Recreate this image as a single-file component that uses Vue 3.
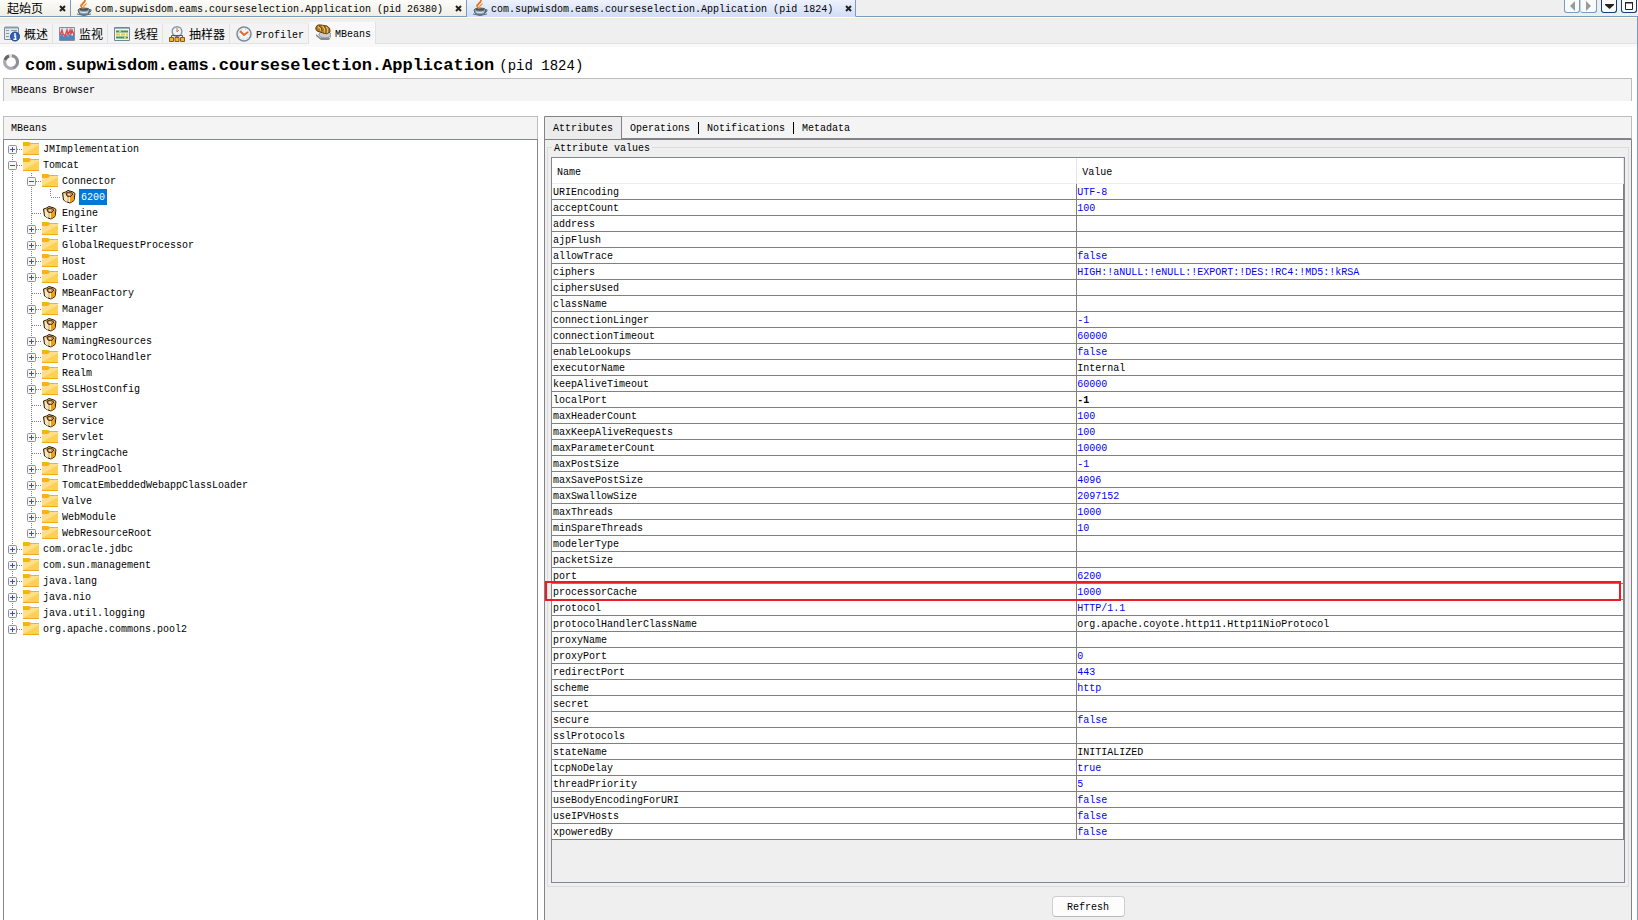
<script setup>
import { ref } from 'vue'

const docTabs = [
  { title: '起始页', icon: false },
  { title: 'com.supwisdom.eams.courseselection.Application (pid 26380)', icon: true },
  { title: 'com.supwisdom.eams.courseselection.Application (pid 1824)', icon: true, active: true }
]

const viewTabs = [
  { id: 'overview', title: '概述' },
  { id: 'monitor', title: '监视' },
  { id: 'threads', title: '线程' },
  { id: 'sampler', title: '抽样器' },
  { id: 'profiler', title: 'Profiler' },
  { id: 'mbeans', title: 'MBeans' }
]
const activeView = ref('mbeans')

const paneTabs = ['Attributes', 'Operations', 'Notifications', 'Metadata']
const activePane = ref('Attributes')

// [label, depth, expander, icon]; expander is '+', '-' or ''
const nodes = [
  ['JMImplementation', 0, '+', 'folder'],
  ['Tomcat', 0, '-', 'folder'],
  ['Connector', 1, '-', 'folder'],
  ['6200', 2, '', 'bean'],
  ['Engine', 1, '', 'bean'],
  ['Filter', 1, '+', 'folder'],
  ['GlobalRequestProcessor', 1, '+', 'folder'],
  ['Host', 1, '+', 'folder'],
  ['Loader', 1, '+', 'folder'],
  ['MBeanFactory', 1, '', 'bean'],
  ['Manager', 1, '+', 'folder'],
  ['Mapper', 1, '', 'bean'],
  ['NamingResources', 1, '+', 'bean'],
  ['ProtocolHandler', 1, '+', 'folder'],
  ['Realm', 1, '+', 'folder'],
  ['SSLHostConfig', 1, '+', 'folder'],
  ['Server', 1, '', 'bean'],
  ['Service', 1, '', 'bean'],
  ['Servlet', 1, '+', 'folder'],
  ['StringCache', 1, '', 'bean'],
  ['ThreadPool', 1, '+', 'folder'],
  ['TomcatEmbeddedWebappClassLoader', 1, '+', 'folder'],
  ['Valve', 1, '+', 'folder'],
  ['WebModule', 1, '+', 'folder'],
  ['WebResourceRoot', 1, '+', 'folder'],
  ['com.oracle.jdbc', 0, '+', 'folder'],
  ['com.sun.management', 0, '+', 'folder'],
  ['java.lang', 0, '+', 'folder'],
  ['java.nio', 0, '+', 'folder'],
  ['java.util.logging', 0, '+', 'folder'],
  ['org.apache.commons.pool2', 0, '+', 'folder']
]

// A guide continues downward while a later sibling exists at that depth.
function continues(index, depth) {
  for (let i = index + 1; i < nodes.length; i++) {
    if (nodes[i][1] < depth) return false
    if (nodes[i][1] === depth) return true
  }
  return false
}

const tree = nodes.map(([label, depth, expander, icon], i) => ({
  label,
  expander,
  icon,
  cells: Array.from({ length: depth + 1 }, (_, d) => ({
    own: d === depth,
    up: i > 0,
    down: continues(i, d)
  }))
}))
const selected = ref('6200')

const attributes = [
  ['URIEncoding', 'UTF-8'],
  ['acceptCount', '100'],
  ['address', ''],
  ['ajpFlush', ''],
  ['allowTrace', 'false'],
  ['ciphers', 'HIGH:!aNULL:!eNULL:!EXPORT:!DES:!RC4:!MD5:!kRSA'],
  ['ciphersUsed', ''],
  ['className', ''],
  ['connectionLinger', '-1'],
  ['connectionTimeout', '60000'],
  ['enableLookups', 'false'],
  ['executorName', 'Internal', 'plain'],
  ['keepAliveTimeout', '60000'],
  ['localPort', '-1', 'strong'],
  ['maxHeaderCount', '100'],
  ['maxKeepAliveRequests', '100'],
  ['maxParameterCount', '10000'],
  ['maxPostSize', '-1'],
  ['maxSavePostSize', '4096'],
  ['maxSwallowSize', '2097152'],
  ['maxThreads', '1000'],
  ['minSpareThreads', '10'],
  ['modelerType', ''],
  ['packetSize', ''],
  ['port', '6200'],
  ['processorCache', '1000'],
  ['protocol', 'HTTP/1.1'],
  ['protocolHandlerClassName', 'org.apache.coyote.http11.Http11NioProtocol', 'plain'],
  ['proxyName', ''],
  ['proxyPort', '0'],
  ['redirectPort', '443'],
  ['scheme', 'http'],
  ['secret', ''],
  ['secure', 'false'],
  ['sslProtocols', ''],
  ['stateName', 'INITIALIZED', 'plain'],
  ['tcpNoDelay', 'true'],
  ['threadPriority', '5'],
  ['useBodyEncodingForURI', 'false'],
  ['useIPVHosts', 'false'],
  ['xpoweredBy', 'false']
]
</script>

<template>
  <div class="window">
    <header class="docbar">
      <div v-for="tab in docTabs" :key="tab.title" class="doc" :class="{ active: tab.active, start: !tab.icon }">
        <svg v-if="tab.icon" class="i16" viewBox="0 0 16 16" aria-hidden="true">
          <path d="M2 10Q2 8 8 8t6 2l-1 3q-2 2-5 2t-5-2z" fill="#8fa3b3" stroke="#4d6475" />
          <ellipse cx="8" cy="9.5" rx="4.5" ry="1.3" fill="#4a545c" />
          <path d="M13 10q3-1 2 1t-3 2" fill="none" stroke="#4d6475" />
          <path d="M1 14q7 3 14 0" fill="none" stroke="#5b6f7e" />
          <path d="M4 12q4 1 8 0" stroke="#dfe9f0" fill="none" />
          <path d="M9 0q1 2-2 4t0 5q-4-3-1-5.500T9 0z" fill="#e8701a" stroke="#e8701a" />
          <path d="M11 3q0 1.500-2 3t0 3q-3-1-1.500-3.500T11 3z" fill="#f59a3a" />
        </svg>
        <button class="title" type="button">{{ tab.title }}</button>
        <button class="close" type="button" :aria-label="'Close ' + tab.title">
          <svg width="7" height="7" viewBox="0 0 7 7"><path d="M1 1l5 5M6 1l-5 5" stroke="#222" stroke-width="2" /></svg>
        </button>
      </div>
      <div class="tools">
        <div class="pager">
          <button type="button" aria-label="Previous"><svg width="5" height="10" viewBox="0 0 5 10"><path d="M5 0v10L0 5z" fill="#999" /></svg></button>
          <button type="button" aria-label="Next"><svg width="5" height="10" viewBox="0 0 5 10"><path d="M0 0v10l5-5z" fill="#999" /></svg></button>
        </div>
        <button class="tool" type="button" aria-label="Show documents"><svg width="9" height="5" viewBox="0 0 9 5"><path d="M0 0h9v1L4.500 5 0 1z" fill="#222" /></svg></button>
        <button class="tool" type="button" aria-label="Maximize"><svg width="8" height="8" viewBox="0 0 8 8"><path d="M.5 1h7v6.500h-7z" fill="#fff" stroke="#222" /><path d="M0 .5h8" stroke="#222" /></svg></button>
      </div>
    </header>

    <div class="body">
      <nav class="views">
        <button
          v-for="tab in viewTabs"
          :key="tab.id"
          type="button"
          class="view"
          :class="{ active: tab.id === activeView }"
          @click="activeView = tab.id"
        >
          <svg class="i16" viewBox="0 0 16 16" aria-hidden="true">
            <g v-if="tab.id === 'overview'">
              <path d="M.5 1.500h14v12H.5z" fill="#e4eaf0" stroke="#7a8c9e" />
              <path d="M1 1.500h13" stroke="#8a9bab" stroke-width="2" />
              <path d="M2 4.500h3M2 7.500h3M2 10.500h3M7 4.500h6" stroke="#8795a2" />
              <circle cx="11" cy="10.500" r="4.500" fill="#2f62b5" stroke="#1d4288" />
              <path d="M11 7v2M10 10h1.500v3M9.500 13.200h3" stroke="#fff" fill="none" stroke-width="1.400" />
            </g>
            <g v-else-if="tab.id === 'monitor'">
              <path d="M.5 1.500h15v13H.5z" fill="#dce9f5" stroke="#7f90a3" />
              <path d="M1 14V10l2-3 2 4 2-3 2 3 2-4 2 3 2-2v6z" fill="#4b86c8" />
              <path d="M1 9l2-5 1 4 2 2 2-6 1 5 2-5 1 4 1-4 2 5" fill="none" stroke="#e04848" stroke-width="1.400" />
            </g>
            <g v-else-if="tab.id === 'threads'">
              <path d="M.5 1.500h15v13H.5z" fill="#eef3f7" stroke="#71869a" />
              <path d="M1 2.500h14" stroke="#9cb0c1" />
              <path d="M2 5.500h12M2 11.500h12" stroke="#3d9a49" stroke-width="2" />
              <path d="M2 8.500h12" stroke="#f0c340" stroke-width="2" stroke-dasharray="4 1" />
              <path d="M5 5.500h2M10 11.500h2" stroke="#e6d54c" stroke-width="2" />
            </g>
            <g v-else-if="tab.id === 'sampler'">
              <circle cx="8" cy="5.500" r="4.800" fill="#eef4fa" stroke="#8695a6" stroke-width="1.400" />
              <path d="M8 2v4l2-2" fill="none" stroke="#cf6e28" />
              <path d="M8 10v2M2.500 12V9.500h11V12" fill="none" stroke="#6a5428" />
              <path d="M.5 11.500h4v4h-4zM6 11.500h4v4H6zM11.500 11.500h4v4h-4z" fill="#f0b53a" stroke="#85581a" />
            </g>
            <g v-else-if="tab.id === 'profiler'">
              <circle cx="8" cy="8" r="7" fill="#f1f6fb" stroke="#818b98" stroke-width="1.600" />
              <circle cx="8" cy="8" r="5" fill="none" stroke="#a9bccf" stroke-dasharray="1 3" />
              <path d="M4 5l4 4 4-3" fill="none" stroke="#e4662c" stroke-width="2" />
            </g>
            <g v-else>
              <path d="M1 10l5 4h9l1-3v2l-2 3H6l-5-4z" fill="#858b91" />
              <ellipse cx="10" cy="10.500" rx="6" ry="3.500" fill="#c9cdd1" stroke="#858b91" />
              <path d="M1 3q1-3 5-2l6 1q4 2 3 6-3 3-7 1L2 7Q0 5 1 3z" fill="#b27b24" stroke="#664210" />
              <path d="M3 3q3 0 3 4M7 2q3 1 3 7M11 3q2 2 1 6" fill="none" stroke="#ecc66e" stroke-width="1.300" />
              <path d="M4 2q3 1 3 5M9 2q3 2 2 7" fill="none" stroke="#664210" />
            </g>
          </svg>
          <span>{{ tab.title }}</span>
        </button>
      </nav>

      <h1 class="heading">
        <svg class="i16" viewBox="0 0 16 16" aria-hidden="true">
          <circle cx="8" cy="8" r="6.300" fill="none" stroke="#d9d9dc" stroke-width="3" />
          <path d="M9 1.700A6.300 6.300 0 0 1 10 14" fill="none" stroke="#8f8f96" stroke-width="3" />
          <path d="M10 14A6.300 6.300 0 0 1 2 6" fill="none" stroke="#aaaab0" stroke-width="3" />
          <path d="M2 6A6.300 6.300 0 0 1 6 2" fill="none" stroke="#66666f" stroke-width="3" />
        </svg>
        <span>com.supwisdom.eams.courseselection.Application</span>
        <span class="pid">(pid 1824)</span>
      </h1>

      <h2 class="strip browser">MBeans Browser</h2>

      <main class="split">
        <section class="left">
          <h2 class="strip">MBeans</h2>
          <ul class="tree">
            <li v-for="node in tree" :key="node.label" class="node">
              <component
                :is="cell.own && node.expander ? 'button' : 'span'"
                v-for="(cell, d) in node.cells"
                :key="d"
                class="cell"
                :type="cell.own && node.expander ? 'button' : null"
                :aria-label="cell.own && node.expander ? 'Toggle ' + node.label : null"
              >
                <svg width="19" height="16" viewBox="0 0 19 16">
                  <g stroke="#808080" stroke-dasharray="1 1">
                    <path v-if="cell.up && (cell.own || cell.down)" d="M8.500 0v8" />
                    <path v-if="cell.down" d="M8.500 8v8" />
                    <path v-if="cell.own" d="M9 8.500h10" />
                  </g>
                  <g v-if="cell.own && node.expander">
                    <rect x="4.500" y="4.500" width="8" height="8" rx="1" fill="#f6f6f6" stroke="#919191" />
                    <path d="M6 8.500h5" stroke="#3a55a5" />
                    <path v-if="node.expander === '+'" d="M8.500 6v5" stroke="#3a55a5" />
                  </g>
                </svg>
              </component>
              <svg v-if="node.icon === 'folder'" class="i16" viewBox="0 0 16 16" aria-hidden="true">
                <path d="M0 1h6l2 1h8v3H0z" fill="#f5b40f" />
                <path d="M0 5h6l2-2h8v10H0z" fill="#ffe08a" />
                <path d="M0 13l16-9v9z" fill="#ffd054" />
                <path d="M0 13.500h16" stroke="#eeaa20" />
              </svg>
              <svg v-else class="i16" viewBox="0 0 16 16" aria-hidden="true">
                <path d="M1.500 4l3-1L7 1.500 12 3l2 1.500-1 7L9 14l-3-1-3.500-2z" fill="#e9c68b" stroke="#2c1b05" />
                <path d="M8.500 8L13 5v6l-4.500 3z" fill="#f79a0c" />
                <path d="M3 5l3 2v6l-3-2z" fill="#f7e4bf" />
                <path d="M5 4l4-1 3 2-3 3-3-1z" fill="#c2965a" stroke="#4a2f0d" />
                <path d="M7 5l2 1M8.500 8v5" stroke="#fff1cc" />
              </svg>
              <span class="label" :class="{ selected: node.label === selected }" @click="selected = node.label">{{ node.label }}</span>
            </li>
          </ul>
        </section>

        <section class="right">
          <div class="panes">
            <button
              v-for="name in paneTabs"
              :key="name"
              type="button"
              class="pane"
              :class="{ active: name === activePane }"
              @click="activePane = name"
            ><span>{{ name }}</span></button>
          </div>
          <div class="content">
            <fieldset class="group">
              <legend>Attribute values</legend>
              <div class="scroll">
                <table>
                  <thead>
                    <tr><th class="name">Name</th><th>Value</th></tr>
                  </thead>
                  <tbody>
                    <tr v-for="[name, value, kind] in attributes" :key="name">
                      <td>{{ name }}<span v-if="name === 'processorCache'" class="mark"></span></td>
                      <td class="value" :class="kind">{{ value }}</td>
                    </tr>
                  </tbody>
                </table>
              </div>
            </fieldset>
            <button class="refresh" type="button">Refresh</button>
          </div>
        </section>
      </main>
    </div>
  </div>
</template>

<style>
body {
  margin: 0;
}
</style>

<style scoped>
.window {
  height: 100vh;
  overflow: hidden;
  display: flex;
  flex-direction: column;
  background: #fff;
  color: #000;
  font: 10px/16px "Liberation Mono", "Noto Sans CJK SC", monospace;
}
* {
  box-sizing: border-box;
}
button {
  margin: 0;
  padding: 0;
  border: 0;
  background: none;
  color: inherit;
  font: inherit;
}
svg {
  display: block;
}
.i16 {
  width: 16px;
  height: 16px;
  flex: none;
}

.docbar {
  display: flex;
  height: 17px;
  flex: none;
  background: #efefef;
}
.doc {
  display: flex;
  align-items: center;
  padding: 0 4px 0 5px;
  border-right: 1px solid #7a9bbd;
  border-bottom: 1px solid #7a9bbd;
  background: linear-gradient(#fcfcf9, #f0eee4);
  white-space: nowrap;
}
.doc.start {
  padding-left: 7px;
  font-size: 12px;
}
.doc.active {
  padding-right: 3px;
  border-bottom-color: #d3def5;
  background: linear-gradient(#eef2fc, #d3def5);
}
.doc .title {
  margin: 0 12px 0 3px;
  padding-top: 4px;
}
.doc.start .title {
  margin: 0 16px 0 0;
}
.close {
  padding-top: 1px;
}
.tools {
  flex: 1;
  display: flex;
  justify-content: flex-end;
  gap: 4px;
  padding-right: 1px;
  border-bottom: 1px solid #7a9bbd;
}
.pager {
  display: flex;
}
.pager button,
.tool {
  display: grid;
  place-items: center;
  width: 16px;
  height: 13px;
  border: 1px solid #7a9bbd;
  border-top: 0;
  border-radius: 0 0 3px 3px;
  background: #fafafa;
}
.pager button + button {
  width: 17px;
  border-left-color: #d0d0d0;
}
.tool {
  border-color: #123f7c;
}

.body {
  flex: 1;
  min-height: 0;
  display: flex;
  flex-direction: column;
  border-right: 1px solid #7a9bbd;
}
.views {
  display: flex;
  align-items: flex-end;
  flex: none;
  height: 30px;
  border-top: 1px solid #fff;
  border-bottom: 3px solid #f9f9f9;
  background: linear-gradient(#f0ebd8 1px, #efefef 1px);
}
.view {
  display: flex;
  align-items: center;
  gap: 4px;
  height: 20px;
  padding: 1px 4px 0 6px;
  border-right: 1px solid #e2e2e2;
  border-bottom: 1px solid #e2e2e2;
  background: #f3f3f3;
  font-size: 12px;
}
.view span {
  padding-top: 3px;
}
.view:first-child {
  padding-left: 4px;
}
.view:nth-child(n + 5) {
  font-size: 10px;
}
.view.active {
  align-items: flex-start;
  height: 22px;
  padding-top: 2px;
  border-bottom: 0;
  background: #f9f9f9;
}
.views::after {
  content: "";
  flex: 1;
  height: 1px;
  background: #e2e2e2;
}

.heading {
  display: flex;
  align-items: center;
  height: 31px;
  flex: none;
  margin: 0;
  padding: 6px 3px 0;
  font-size: 17px;
  line-height: 20px;
}
.heading .i16 {
  margin: 0 6px 7px 0;
}
.heading .pid {
  margin-left: 5px;
  font-size: 14px;
  font-weight: 400;
}

.strip {
  height: 23px;
  flex: none;
  margin: 0;
  padding: 4px 7px;
  border: 1px solid #bdbdbd;
  border-bottom: 0;
  background: #f4f4f4;
  font-size: 10px;
  font-weight: 400;
}
.browser {
  margin: 0 5px 15px 3px;
}

.split {
  flex: 1;
  min-height: 0;
  display: grid;
  grid-template-columns: 535fr 1088fr;
  gap: 6px;
  margin: 0 5px 0 3px;
}
.left,
.right {
  display: flex;
  flex-direction: column;
  min-width: 0;
  min-height: 0;
}
.tree {
  flex: 1;
  margin: 0;
  padding: 1px 0 0;
  border: 1px solid #828790;
  border-bottom: 0;
  list-style: none;
}
.node {
  display: flex;
  height: 16px;
}
.cell {
  flex: none;
  width: 19px;
  height: 16px;
}
.label {
  margin-left: 2px;
  padding: 0 2px;
  height: 16px;
  line-height: 17px;
}
.label.selected {
  background: #0078d7;
  color: #fff;
}

.panes {
  display: flex;
  height: 24px;
  flex: none;
  border: 1px solid #bdbdbd;
  border-bottom: 2px solid #828287;
  border-left-color: #828287;
  background: #f4f4f4;
}
.pane {
  display: flex;
  align-items: center;
  padding-left: 8px;
}
.pane span {
  height: 12px;
  padding-right: 8px;
  border-right: 1px solid #000;
  line-height: 13px;
}
.pane.active {
  margin: -1px 0;
  border: 1px solid #828287;
  border-left: 0;
  border-bottom: 0;
  background: #ececec;
}
.pane.active span,
.pane:last-child span {
  border: 0;
}
.content {
  flex: 1;
  min-height: 0;
  display: flex;
  flex-direction: column;
  align-items: center;
  padding: 0 2px 3px;
  border: 1px solid #828287;
  border-top: 0;
  border-bottom: 0;
  background: #efefef;
}
.group {
  flex: 1;
  align-self: stretch;
  display: flex;
  flex-direction: column;
  min-width: 0;
  margin: 0 0 9px;
  padding: 3px;
  border: 1px solid #dcdcdc;
}
.group legend {
  height: 14px;
  margin-left: 1px;
  padding: 0 2px;
  line-height: 18px;
}
.scroll {
  flex: 1;
  border: 1px solid #828790;
}
table {
  width: 100%;
  border-collapse: separate;
  border-spacing: 0;
  table-layout: fixed;
}
th {
  height: 26px;
  padding: 5px 5px 0;
  border-right: 1px solid #e5e5e5;
  border-bottom: 1px solid #ededed;
  background: #fff;
  font-weight: 400;
  line-height: 16px;
  text-align: left;
}
th.name {
  width: 49%;
}
tbody tr {
  position: relative;
}
td {
  height: 16px;
  padding: 3px 1px 0;
  border-right: 1px solid #808080;
  border-bottom: 1px solid #808080;
  background: #fff;
  line-height: 12px;
  white-space: nowrap;
}
.value {
  padding-left: 0;
  color: #00f;
}
.value.plain {
  color: #000;
}
.value.strong {
  color: #000;
  font-weight: 700;
}
.mark {
  position: absolute;
  z-index: 1;
  top: -3px;
  right: 3px;
  left: -7px;
  height: 20px;
  border: 2px solid #ed1c24;
}
.refresh {
  width: 73px;
  height: 21px;
  padding-top: 2px;
  border: 1px solid #cfcfcf;
  border-bottom-color: #b9b9b9;
  border-radius: 4px;
  background: #fdfdfd;
}
</style>
